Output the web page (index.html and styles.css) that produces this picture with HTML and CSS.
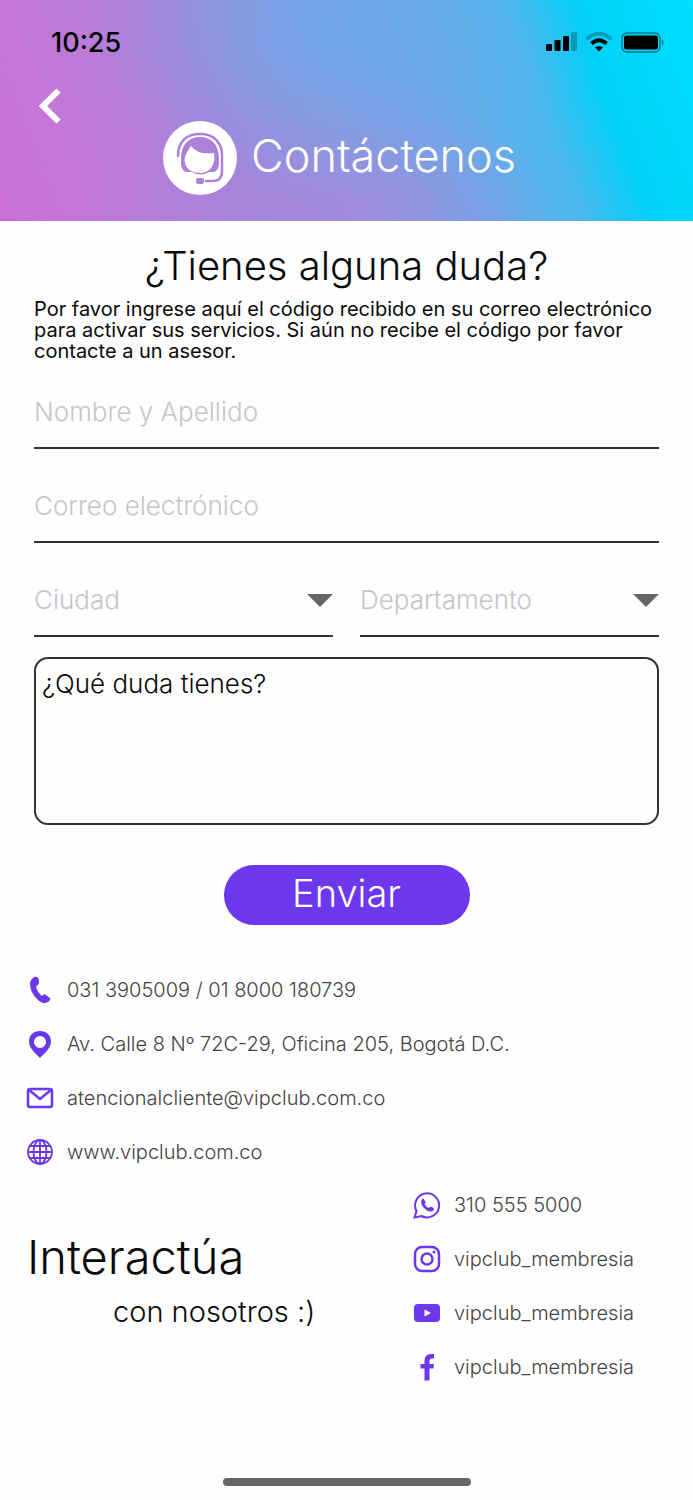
FILE: index.html
```html
<!DOCTYPE html>
<html lang="es">
<head>
    <meta charset="UTF-8">
    <meta name="viewport" content="width=device-width, initial-scale=1.0">
    <link rel="stylesheet" href="styles.css">
    <title>Contáctenos</title>
</head>
<body>
    <header class="header">
        <div class="status-bar">
            <span class="time">10:25</span>
            <div class="status-icons">
                <svg width="31" height="20" viewBox="0 0 31 20">
                    <rect x="0" y="12" width="6" height="7" rx="1"/>
                    <rect x="8.500" y="8" width="6" height="11" rx="1"/>
                    <rect x="17" y="4" width="6" height="15" rx="1"/>
                    <rect x="25" y="0" width="6" height="19" rx="1" opacity="0.25"/>
                </svg>
                <svg width="28" height="20" viewBox="0 0 28 20" fill="none" stroke="#000">
                    <path d="M1.500 7Q14-3.500 26.500 7" stroke-width="4" opacity="0.25"/>
                    <path d="M6.500 11.500Q14 5 21.500 11.500" stroke-width="4"/>
                    <path d="M10 15.500Q14 13 18 15.500L14 19.500Z" fill="#000" stroke="none"/>
                </svg>
                <svg width="44" height="21" viewBox="0 0 44 21">
                    <rect x="1" y="1" width="38" height="19" rx="5" fill="none" stroke="#000" stroke-width="1.500" opacity="0.45"/>
                    <rect x="3" y="3.500" width="34" height="14" rx="2.500"/>
                    <path d="M41 7q3 3.500 0 7z" opacity="0.45"/>
                </svg>
            </div>
        </div>
        <button class="back" type="button" aria-label="Volver">
            <svg width="24" height="36" viewBox="0 0 24 36" fill="none" stroke="#fff" stroke-width="6">
                <path d="M20.500 2.500L5 18L20.500 33.500"/>
            </svg>
        </button>
        <div class="title">
            <svg width="74" height="74" viewBox="0 0 74 74">
                <circle cx="37" cy="37" r="37" fill="#fff"/>
                <path d="M18 38C18 24 25 16 37 16S56 24 56 38V42Q56 49 51 51H46Q37 56 29 51H23Q18 49 18 42Z" fill="#ad80da"/>
                <path d="M28 25Q35 34 51 32C53 44 47 52 37 52C24 52 18 41 24 31Q26 28 28 25Z" fill="#fff"/>
                <path d="M15 35C15 20 24 13 37 13S59 21 59 34V50Q59 60 50 60H43" fill="none" stroke="#ad80da" stroke-width="2.500" stroke-linecap="round"/>
                <rect x="33" y="57" width="8" height="6" rx="2" fill="#ad80da"/>
            </svg>
            <h1>Contáctenos</h1>
        </div>
    </header>

    <main>
        <form class="form">
            <h2>¿Tienes alguna duda?</h2>
            <p>Por favor ingrese aquí el código recibido en su correo electrónico para activar sus servicios. Si aún no recibe el código por favor contacte a un asesor.</p>

            <input class="field" type="text" placeholder="Nombre y Apellido" aria-label="Nombre y Apellido">
            <input class="field" type="email" placeholder="Correo electrónico" aria-label="Correo electrónico">

            <div class="selects">
                <div class="select">
                    <select class="field" aria-label="Ciudad">
                        <option>Ciudad</option>
                    </select>
                    <svg width="26" height="13" viewBox="0 0 26 13"><path d="M0 0H26L13 13Z" fill="#666"/></svg>
                </div>
                <div class="select">
                    <select class="field" aria-label="Departamento">
                        <option>Departamento</option>
                    </select>
                    <svg width="26" height="13" viewBox="0 0 26 13"><path d="M0 0H26L13 13Z" fill="#666"/></svg>
                </div>
            </div>

            <textarea placeholder="¿Qué duda tienes?" aria-label="¿Qué duda tienes?"></textarea>
            <button class="send" type="button">Enviar</button>
        </form>

        <ul class="contact">
            <li>
                <svg width="28" height="28" viewBox="0 0 28 28"><path d="M7 2Q9 0 11 1Q13 2 13 6Q13 9 10 10Q11 16 16 20Q18 17 20 19L24 22Q25 24 22 26Q17 29 12 24Q4 17 4 7Q4 4 7 2Z" fill="#6c37ed"/></svg>
                <a href="tel:0313905009">031 3905009 / 01 8000 180739</a>
            </li>
            <li>
                <svg width="28" height="28" viewBox="0 0 28 28"><path fill-rule="evenodd" d="M14 1C8 1 3 5 3 11.500C3 18 9 23 14 28C19 23 25 18 25 11.500C25 5 20 1 14 1ZM14 6A6 6 0 1 1 14 18A6 6 0 1 1 14 6Z" fill="#6c37ed"/></svg>
                <span>Av. Calle 8 Nº 72C-29, Oficina 205, Bogotá D.C.</span>
            </li>
            <li>
                <svg width="28" height="28" viewBox="0 0 28 28" fill="none" stroke="#6c37ed" stroke-width="2.500"><rect x="2" y="5" width="24" height="18" rx="2"/><path d="M3 6L14 15L25 6"/></svg>
                <a href="mailto:atencionalcliente@vipclub.com.co">atencionalcliente@vipclub.com.co</a>
            </li>
            <li>
                <svg width="28" height="28" viewBox="0 0 28 28" fill="none" stroke="#6c37ed" stroke-width="1.800"><circle cx="14" cy="14" r="12"/><ellipse cx="14" cy="14" rx="6.500" ry="12"/><path d="M14 2V26M2 14H26M4 8H24M4 20H24"/></svg>
                <a href="http://www.vipclub.com.co">www.vipclub.com.co</a>
            </li>
        </ul>

        <section class="social">
            <div class="interact">
                <h3>Interactúa</h3>
                <p>con nosotros :)</p>
            </div>
            <ul class="contact">
                <li>
                    <svg width="28" height="28" viewBox="0 0 28 28"><path d="M1.500 26.500L3.500 20A12 12 0 1 1 8.500 25Z" fill="none" stroke="#6c37ed" stroke-width="2"/><path d="M8.500 9Q10 6.500 11.500 9L12.500 11Q13 12 11.500 13Q13 16 16 17Q17.500 15 19 16L21 17.500Q21 20 18 20.500Q15 21 11 17Q7 13 8.500 9Z" fill="#6c37ed"/></svg>
                    <a href="tel:3105555000">310 555 5000</a>
                </li>
                <li>
                    <svg width="28" height="28" viewBox="0 0 28 28" fill="none" stroke="#6c37ed" stroke-width="2.500"><rect x="2" y="2" width="24" height="24" rx="7"/><circle cx="14" cy="14" r="5.500"/><circle cx="21" cy="7" r="1.500" fill="#6c37ed" stroke="none"/></svg>
                    <a href="#">vipclub_membresia</a>
                </li>
                <li>
                    <svg width="28" height="28" viewBox="0 0 28 28"><rect x="1" y="5" width="26" height="18" rx="4" fill="#6c37ed"/><path d="M11.500 10.500L18 14L11.500 17.500Z" fill="#fff"/></svg>
                    <a href="#">vipclub_membresia</a>
                </li>
                <li>
                    <svg width="28" height="28" viewBox="0 0 28 28"><path d="M11.500 27.500V15.500H7.500V11H11.500V8Q11.500 1 18 1H21V5.500H18.500Q16.500 5.500 16.500 8V11H21L20.500 15.500H16.500V27.500Z" fill="#6c37ed"/></svg>
                    <a href="#">vipclub_membresia</a>
                </li>
            </ul>
        </section>
    </main>

    <div class="home-bar"></div>
</body>
</html>
```

FILE: styles.css
```css
* {
    box-sizing: border-box;
}

body {
    margin: 0;
    min-height: 100vh;
    display: flex;
    flex-direction: column;
    background-color: #fefefe;
    color: #0a0a0a;
    font-family: Inter, "Open Sans", sans-serif;
    font-weight: 300;
}

h1, h2, h3, p, ul {
    margin: 0;
    padding: 0;
    font-weight: 300;
}

svg {
    display: block;
    flex-shrink: 0;
}

input, select, textarea, button {
    font: inherit;
    color: inherit;
}

/* Header */
.header {
    height: 221px;
    padding-top: 24px;
    background:
        radial-gradient(ellipse 36% 75% at 50% 15%, rgba(108, 170, 234, 0.8), rgba(108, 170, 234, 0)),
        radial-gradient(ellipse 34% 75% at 46% 105%, rgba(165, 135, 221, 0.9), rgba(165, 135, 221, 0)),
        linear-gradient(69deg, #c96fd5 0%, #c278d8 14%, #ab80da 32%, #8c98e2 48%, #6aaae9 62%, #4cb8ee 75%, #00d0f8 84%, #00dfff 100%);
}

.status-bar {
    display: flex;
    justify-content: space-between;
    align-items: center;
    height: 36px;
    padding: 0 28px 0 51px;
}

.time {
    color: #000;
    font-size: 27px;
    font-weight: 500;
}

.status-icons {
    display: flex;
    align-items: center;
    gap: 8px;
}

.back {
    display: block;
    margin: 28px 0 0 38px;
    padding: 0;
    border: none;
    background: none;
    cursor: pointer;
}

.title {
    display: flex;
    justify-content: center;
    align-items: center;
    gap: 14px;
    margin-top: -3px;
    padding-right: 14px;
    color: #fff;
}

.title h1 {
    font-size: 45px;
    line-height: 70px;
    padding-bottom: 4px;
}

/* Form */
.form {
    padding: 20px 34px 0;
    display: flex;
    flex-direction: column;
}

.form h2 {
    font-size: 40px;
    line-height: 50px;
    text-align: center;
}

.form p {
    margin-top: 8px;
    font-size: 20px;
    font-weight: 400;
    line-height: 21px;
}

.field {
    width: 100%;
    height: 94px;
    padding: 20px 0 0;
    border: none;
    border-bottom: 2px solid #333;
    border-radius: 0;
    background: transparent;
    font-size: 26px;
}

.form p + .field {
    height: 87px;
    padding-top: 13px;
}

.field::placeholder {
    color: #c6c6ca;
    opacity: 1;
}

.selects {
    display: grid;
    grid-template-columns: 1fr 1fr;
    gap: 27px;
}

/* The arrow shares the cell of its select */
.select {
    display: grid;
    align-items: center;
}

.select select,
.select svg {
    grid-area: 1 / 1;
}

.select select {
    appearance: none;
    color: #c6c6ca;
}

.select svg {
    justify-self: end;
    margin-top: 20px;
    pointer-events: none;
}

textarea {
    height: 168px;
    margin-top: 20px;
    padding: 10px 6px;
    border: 2px solid #333;
    border-radius: 14px;
    background: transparent;
    font-size: 26px;
    line-height: 30px;
    resize: none;
}

textarea::placeholder {
    color: #0a0a0a;
    opacity: 1;
}

.send {
    align-self: center;
    width: 246px;
    height: 60px;
    margin-top: 40px;
    padding: 0 0 4px;
    border: none;
    border-radius: 30px;
    background-color: #6c37ed;
    color: #fff;
    font-size: 38px;
    line-height: 56px;
    cursor: pointer;
}

/* Contact */
.contact {
    list-style: none;
    padding: 0 26px;
    color: #444;
    font-size: 20px;
}

main > .contact {
    margin-top: 38px;
}

.contact li {
    display: flex;
    align-items: center;
    gap: 13px;
    height: 54px;
}

.contact a {
    color: inherit;
    text-decoration: none;
}

.social {
    display: grid;
    grid-template-columns: 1fr 280px;
    margin-top: -1px;
}

.social .contact {
    padding: 0;
}

.interact {
    padding: 51px 0 0 27px;
}

.interact h3 {
    font-size: 47px;
    line-height: 56px;
}

.interact p {
    padding-left: 86px;
    font-size: 29px;
    line-height: 54px;
}

.home-bar {
    width: 248px;
    height: 8px;
    margin: auto auto 14px;
    border-radius: 4px;
    background-color: #666;
}
```
